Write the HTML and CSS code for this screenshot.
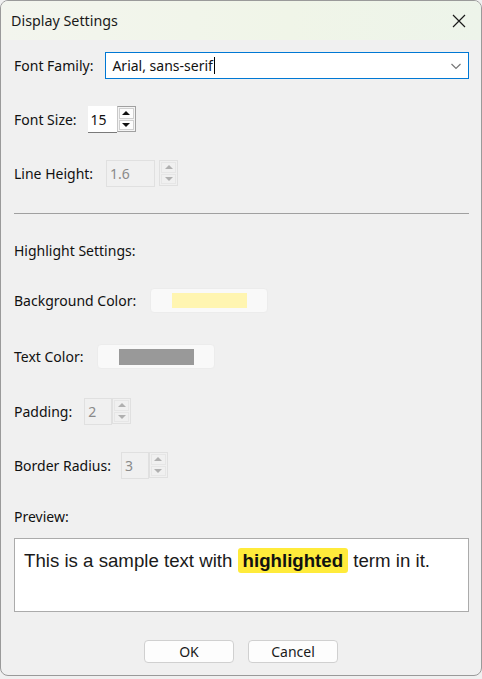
FILE: index.html
```html
<!DOCTYPE html>
<html>
<head>
<meta charset="utf-8">
<link rel="stylesheet" href="styles.css">
</head>
<body>
<div class="window">
  <div class="titlebar">
    <span class="title">Display Settings</span>
    <svg class="close" width="14" height="14" viewBox="0 0 14 14"><path d="M1 1 L13 13 M13 1 L1 13" stroke="#1a1a1a" stroke-width="1.2" fill="none"/></svg>
  </div>
  <div class="content">
    <div class="row r-family">
      <span class="label">Font Family:</span>
      <div class="combo">
        <span class="combo-text">Arial, sans-serif<span class="caret"></span></span>
        <svg class="chev" width="12" height="8" viewBox="0 0 12 8"><path d="M1.5 2 L6 6.5 L10.5 2" stroke="#777" stroke-width="1.2" fill="none"/></svg>
      </div>
    </div>
    <div class="row r-size">
      <span class="label">Font Size:</span>
      <div class="spin">
        <div class="spin-box w-size">15</div>
        <div class="spin-btns">
          <div class="sb"><span class="tri up"></span></div>
          <div class="sb"><span class="tri down"></span></div>
        </div>
      </div>
    </div>
    <div class="row r-line">
      <span class="label">Line Height:</span>
      <div class="spin disabled">
        <div class="spin-box w-line">1.6</div>
        <div class="spin-btns gap">
          <div class="sb"><span class="tri up"></span></div>
          <div class="sb"><span class="tri down"></span></div>
        </div>
      </div>
    </div>
    <div class="sep"></div>
    <div class="row r-head"><span class="label">Highlight Settings:</span></div>
    <div class="row r-bg">
      <span class="label">Background Color:</span>
      <div class="swatch-btn"><span class="swatch sw-yellow"></span></div>
    </div>
    <div class="row r-tc">
      <span class="label">Text Color:</span>
      <div class="swatch-btn"><span class="swatch sw-gray"></span></div>
    </div>
    <div class="row r-pad">
      <span class="label">Padding:</span>
      <div class="spin disabled">
        <div class="spin-box w-small">2</div>
        <div class="spin-btns">
          <div class="sb"><span class="tri up"></span></div>
          <div class="sb"><span class="tri down"></span></div>
        </div>
      </div>
    </div>
    <div class="row r-rad">
      <span class="label">Border Radius:</span>
      <div class="spin disabled">
        <div class="spin-box w-small">3</div>
        <div class="spin-btns">
          <div class="sb"><span class="tri up"></span></div>
          <div class="sb"><span class="tri down"></span></div>
        </div>
      </div>
    </div>
    <div class="row r-prev"><span class="label">Preview:</span></div>
    <div class="preview">This is a sample text with <span class="hl">highlighted</span> term in it.</div>
    <div class="buttons">
      <button class="btn">OK</button>
      <button class="btn">Cancel</button>
    </div>
  </div>
</div>
</body>
</html>
```
FILE: styles.css
```css
html, body {
  margin: 0;
  padding: 0;
  background: #f0f0f0;
}
.window {
  width: 482px;
  height: 676px;
  box-sizing: border-box;
  border: 1px solid #9a9a9a;
  border-radius: 8px;
  overflow: hidden;
  background: #f0f0f0;
  font-family: "Noto Sans", sans-serif;
  font-size: 14px;
  color: #111;
}
.titlebar {
  height: 39px;
  display: flex;
  align-items: center;
  justify-content: space-between;
  padding: 0 15px 0 10px;
  background: linear-gradient(90deg, #f3f5ee 0%, #f0f5e8 60%, #edf4ea 100%);
}
.title {
  font-size: 14.3px;
  color: #1a1a1a;
  margin-top: -1px;
}
.close {
  display: block;
}
.content {
  padding: 0 12px 0 13px;
  display: flex;
  flex-direction: column;
}
.row {
  display: flex;
  align-items: center;
}
.label {
  white-space: nowrap;
}
.r-family { margin-top: 12px; height: 27px; gap: 12px; }
.r-size { margin-top: 27px; height: 27px; gap: 11px; }
.r-line { margin-top: 27px; height: 27px; gap: 13px; }
.sep {
  margin-top: 26px;
  height: 1px;
  background: #a0a0a0;
}
.r-head { margin-top: 26px; height: 20px; }
.r-bg { margin-top: 28px; height: 25px; gap: 14px; }
.r-tc { margin-top: 31px; height: 25px; gap: 14px; }
.r-pad { margin-top: 29px; height: 27px; gap: 12px; }
.r-rad { margin-top: 27px; height: 27px; gap: 10px; }
.r-prev { margin-top: 27px; height: 20px; }

.combo {
  flex: 1;
  height: 27px;
  box-sizing: border-box;
  border: 1px solid #0078d4;
  background: #fff;
  display: flex;
  align-items: center;
  justify-content: space-between;
  padding: 0 6px 0 6px;
}
.combo-text {
  display: flex;
  align-items: center;
}
.caret {
  display: inline-block;
  width: 1px;
  height: 17px;
  background: #000;
  margin-left: 1px;
}
.spin {
  display: flex;
  height: 27px;
}
.spin-box {
  box-sizing: border-box;
  height: 27px;
  background: #fff;
  border-bottom: 1px solid #7a7a7a;
  display: flex;
  align-items: center;
  padding-left: 3px;
  font-size: 14px;
}
.w-size { width: 29px; }
.w-line { width: 49px; }
.w-small { width: 28px; }
.spin-btns {
  display: flex;
  flex-direction: column;
  width: 19px;
  height: 26px;
  box-sizing: border-box;
  border: 1px solid #a0a0a0;
  border-left: 1px solid #c8c8c8;
  background: #f4f4f4;
  padding: 1px;
  gap: 1px;
}
.spin-btns.gap { margin-left: 4px; }
.sb {
  flex: 1;
  background: #fdfdfd;
  border: 1px solid #d0d0d0;
  display: flex;
  align-items: center;
  justify-content: center;
}
.tri {
  width: 0;
  height: 0;
  border-left: 4px solid transparent;
  border-right: 4px solid transparent;
}
.tri.up { border-bottom: 4px solid #111; }
.tri.down { border-top: 4px solid #111; }

.spin.disabled .spin-box {
  background: transparent;
  border: 1px solid #e0e0e0;
  color: #8a8a8a;
}
.spin.disabled .spin-btns {
  border: 1px solid #e0e0e0;
  background: #f0f0f0;
}
.spin.disabled .sb {
  background: #f0f0f0;
  border: 1px solid #e6e6e6;
}
.spin.disabled .tri.up { border-bottom-color: #b0b0b0; }
.spin.disabled .tri.down { border-top-color: #b0b0b0; }

.swatch-btn {
  width: 118px;
  height: 25px;
  box-sizing: border-box;
  background: #f9f9f9;
  border: 1px solid #ececec;
  border-radius: 4px;
  display: flex;
  align-items: center;
  justify-content: center;
}
.swatch {
  width: 75px;
  height: 15px;
}
.sw-yellow { background: #fff5b1; }
.sw-gray { background: #999999; height: 16px; }

.preview {
  margin-top: 12px;
  height: 74px;
  box-sizing: border-box;
  border: 1px solid #ababab;
  background: #fff;
  padding: 8px 9px 0 9px;
  font-family: "Liberation Sans", Arial, sans-serif;
  font-size: 18.67px;
  line-height: 28px;
  color: #1a1a1a;
}
.hl {
  background: #ffeb3b;
  font-weight: bold;
  color: #111;
  padding: 2px 5px;
  border-radius: 3px;
}
.buttons {
  margin-top: 28px;
  display: flex;
  justify-content: center;
  gap: 14px;
  padding-right: 1px;
}
.btn {
  width: 90px;
  height: 23px;
  box-sizing: border-box;
  background: #fdfdfd;
  border: 1px solid #d0d0d0;
  border-radius: 4px;
  font-family: "Noto Sans", sans-serif;
  font-size: 14px;
  color: #1a1a1a;
  padding: 0;
}
```
